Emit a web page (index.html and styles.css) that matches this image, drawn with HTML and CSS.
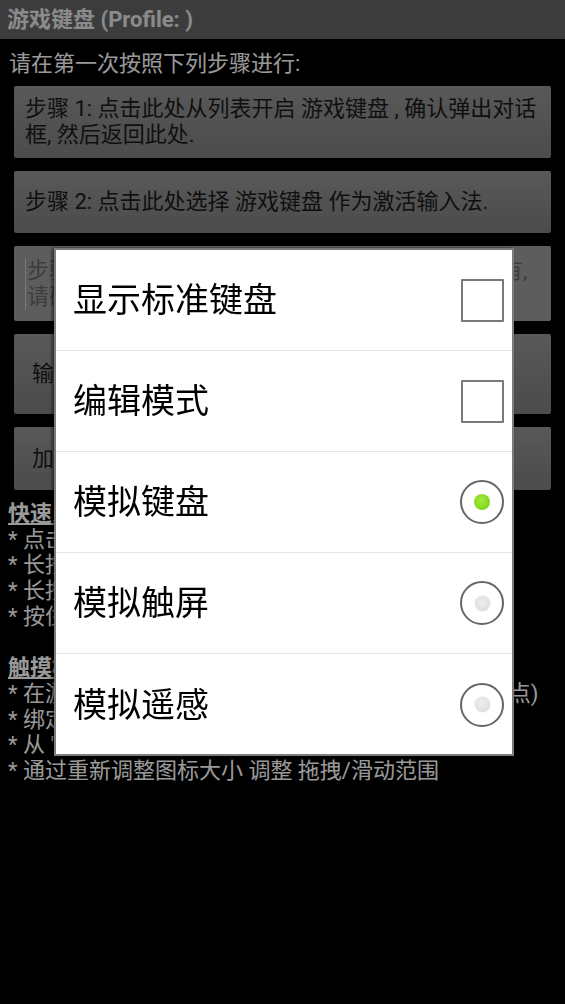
FILE: index.html
```html
<!DOCTYPE html>
<html lang="zh-CN">
<head>
    <meta charset="UTF-8">
    <meta name="viewport" content="width=device-width, initial-scale=1.0">
    <title>游戏键盘</title>
    <link rel="stylesheet" href="styles.css">
</head>
<body>
    <div class="title-bar">游戏键盘 (Profile: )</div>

    <div class="content">
        <p class="intro">请在第一次按照下列步骤进行:</p>

        <div class="step-btn step-1">步骤 1: 点击此处从列表开启 游戏键盘 , 确认弹出对话框, 然后返回此处.</div>
        <div class="step-btn step-2">步骤 2: 点击此处选择 游戏键盘 作为激活输入法.</div>
        <div class="step-btn step-3 disabled"><span class="caret">步骤 3: 如果在游戏中不能使用按键 或者键盘上没有, 请确认已经开启了输入法权限.</span></div>
        <div class="step-btn step-4">输入法设置</div>
        <div class="step-btn step-5">加载配置文件</div>

        <div class="help">
            <p class="help-title">快速入门:</p>
            <p>* 点击图标可以在不同的模式之间切换</p>
            <p>* 长按图标可以打开设置菜单</p>
            <p>* 长按并拖动图标可以移动位置</p>
            <p>* 按住音量键可以隐藏图标</p>
            <p>&nbsp;</p>
            <p class="help-title">触摸模式:</p>
            <p>* 在游戏界面中 长按屏幕 可以添加触摸点 (双击删除点)</p>
            <p>* 绑定按键到触摸点后即可模拟触摸</p>
            <p>* 从 '设置' 菜单中可以保存和加载配置</p>
            <p>* 通过重新调整图标大小 调整 拖拽/滑动范围</p>
        </div>
    </div>

    <div class="dim"></div>

    <div class="dialog">
        <div class="option">
            <span>显示标准键盘</span>
            <span class="checkbox"></span>
        </div>
        <div class="option">
            <span>编辑模式</span>
            <span class="checkbox"></span>
        </div>
        <div class="option">
            <span>模拟键盘</span>
            <span class="radio checked"></span>
        </div>
        <div class="option">
            <span>模拟触屏</span>
            <span class="radio"></span>
        </div>
        <div class="option">
            <span>模拟遥感</span>
            <span class="radio"></span>
        </div>
    </div>
</body>
</html>
```

FILE: styles.css
```css
* {
    box-sizing: border-box;
}
body {
    margin: 0;
    background-color: #000;
    font-family: 'Roboto', 'Noto Sans CJK SC', sans-serif;
    color: #fff;
    font-size: 22px;
    line-height: 26px;
}
p {
    margin: 0;
}
.title-bar {
    height: 39px;
    line-height: 39px;
    padding-left: 7px;
    background-color: #646464;
    color: #e8e8e8;
    font-weight: bold;
    font-size: 22px;
}
.content {
    padding: 12px 14px 0;
}
.intro {
    margin: 0 0 9px -5px;
}
.step-btn {
    display: flex;
    align-items: center;
    margin-bottom: 13px;
    padding: 10px 10px 10px 11px;
    background: linear-gradient(#949494, #7e7e7e);
    border-radius: 2px;
    color: #1a1a1a;
}
.step-1 {
    min-height: 72px;
}
.step-2 {
    min-height: 62px;
}
.step-3 {
    min-height: 75px;
}
.step-4 {
    min-height: 80px;
    padding-left: 18px;
}
.step-5 {
    min-height: 63px;
    margin-bottom: 0;
    padding-left: 18px;
}
.disabled {
    background: #9c9c9c;
    color: #666;
}
.caret {
    border-left: 1px solid #c8c8c8;
    padding-left: 1px;
}
.help {
    margin: 11px 0 0 -6px;
    line-height: 25.7px;
    white-space: nowrap;
}
.help-title {
    font-weight: bold;
    text-decoration: underline;
}
.dim {
    position: fixed;
    top: 0;
    left: 0;
    right: 0;
    bottom: 0;
    background-color: rgba(0, 0, 0, 0.4);
}
.dialog {
    position: fixed;
    left: 54px;
    top: 248px;
    width: 460px;
    height: 508px;
    background-color: #fff;
    border: 2px solid #7c7c7c;
    box-shadow: -2px 0 3px rgba(0, 0, 0, 0.5);
}
.option {
    display: flex;
    align-items: center;
    justify-content: space-between;
    height: 101px;
    padding: 0 8px 0 17px;
    border-bottom: 1px solid #e6e6e6;
    color: #000;
    font-size: 34px;
    line-height: 40px;
}
.option:last-child {
    border-bottom: none;
}
.checkbox {
    width: 43px;
    height: 43px;
    border: 2px solid #7a7a7a;
    border-radius: 1px;
    background-color: #fff;
}
.radio {
    position: relative;
    width: 44px;
    height: 44px;
    border: 2px solid #666;
    border-radius: 50%;
    background-color: #fff;
}
.radio::after {
    content: '';
    position: absolute;
    left: 50%;
    top: 50%;
    width: 15px;
    height: 15px;
    margin: -7.5px 0 0 -7.5px;
    border-radius: 50%;
    background: radial-gradient(circle at 45% 40%, #eeeeee, #d8d8d8);
    box-shadow: 0 0 1px #aaa;
}
.radio.checked::after {
    width: 16px;
    height: 16px;
    margin: -8px 0 0 -8px;
    background: radial-gradient(circle at 45% 40%, #a4ec3c, #74cc12);
    box-shadow: none;
}
```
